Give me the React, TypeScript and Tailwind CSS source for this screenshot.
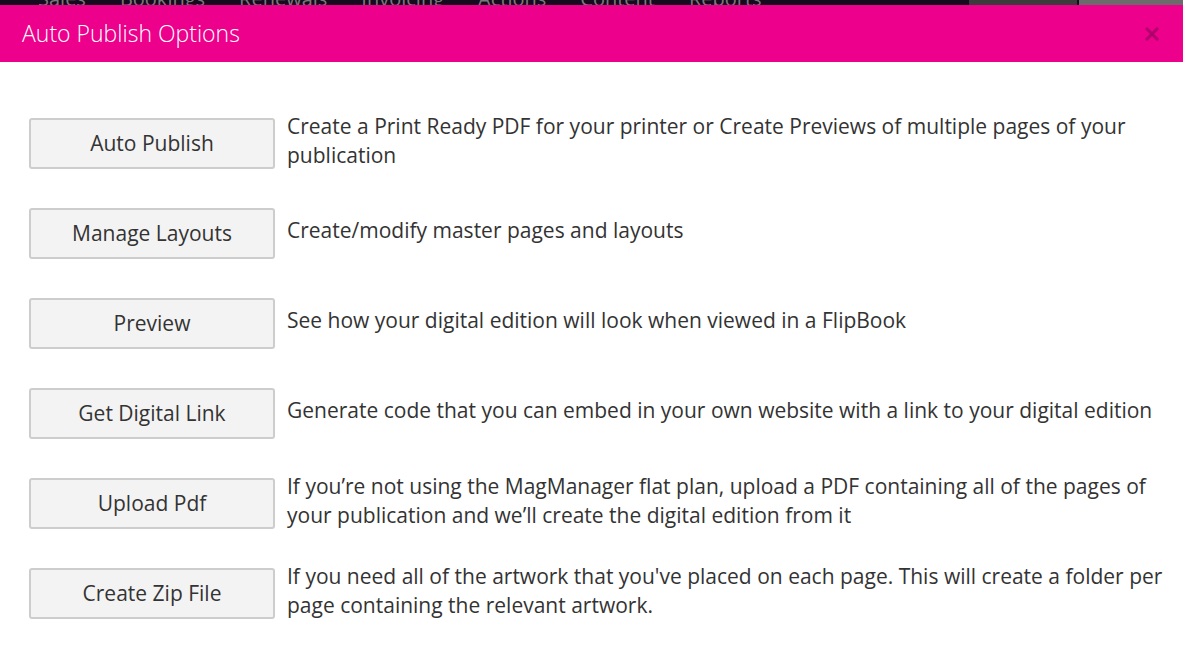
const options = [
  {
    label: 'Auto Publish',
    text: 'Create a Print Ready PDF for your printer or Create Previews of multiple pages of your publication',
  },
  { label: 'Manage Layouts', text: 'Create/modify master pages and layouts' },
  { label: 'Preview', text: 'See how your digital edition will look when viewed in a FlipBook' },
  {
    label: 'Get Digital Link',
    text: 'Generate code that you can embed in your own website with a link to your digital edition',
  },
  {
    label: 'Upload Pdf',
    text: 'If you\u2019re not using the MagManager flat plan, upload a PDF containing all of the pages of your publication and we\u2019ll create the digital edition from it',
  },
  {
    label: 'Create Zip File',
    text: "If you need all of the artwork that you've placed on each page. This will create a folder per page containing the relevant artwork.",
  },
]

const navItems = ['Sales', 'Bookings', 'Renewals', 'Invoicing', 'Actions', 'Content', 'Reports']

export default function App() {
  return (
    <div className="h-[645px] w-[1183px] overflow-hidden bg-white font-['Open_Sans',sans-serif] text-[#333]">
      {/* top nav peeking out behind the modal */}
      <div className="relative flex h-[5px] overflow-hidden bg-[#150a1e]">
        <div className="-mt-[13px] flex gap-[34px] pl-[38px] text-[20px] leading-[24px] text-[#7a7a7a]">
          {navItems.map((item) => (
            <span key={item}>{item}</span>
          ))}
        </div>
        <div className="absolute left-[969px] top-0 h-[5px] w-[108px] bg-[#3b3b3b]" />
        <div className="absolute left-[1079px] top-0 h-[5px] w-[104px] bg-[#6b6b6b]" />
      </div>

      <div className="flex h-[57px] items-center justify-between bg-[#ec008c] pl-[22px] pr-[24px]">
        <h1 className="text-[23px] font-light leading-none text-white">Auto Publish Options</h1>
        <svg width="14" height="14" viewBox="0 0 14 14" className="mt-[1px]">
          <path d="M2 2 L12 12 M12 2 L2 12" stroke="#b0006c" strokeWidth="3" strokeLinecap="square" />
        </svg>
      </div>

      <div className="pl-[29px] pr-[8px] pt-[56px]">
        {options.map((o) => (
          <div key={o.label} className="mb-[39px] flex h-[51px] items-center gap-[12px]">
            <button className="h-[51px] w-[246px] shrink-0 rounded-[3px] border-2 border-[#cdcdcd] bg-[#f3f3f3] text-[21px] text-[#333]">
              {o.label}
            </button>
            <p className="pb-[6px] text-[21px] leading-[29px]">{o.text}</p>
          </div>
        ))}
      </div>
    </div>
  )
}
